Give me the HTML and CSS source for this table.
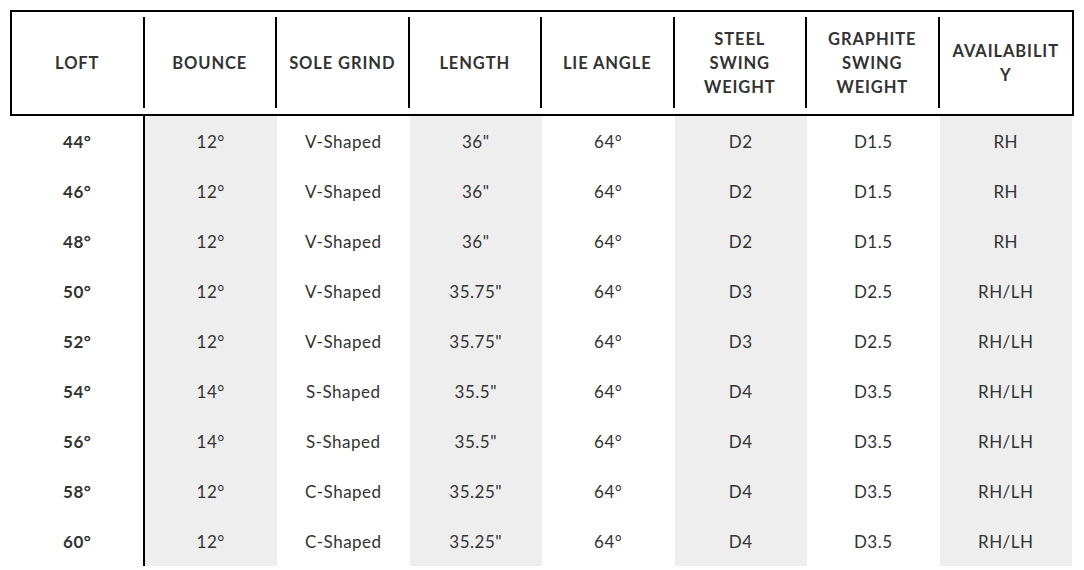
FILE: index.html
```html
<!DOCTYPE html>
<html lang="en">
<head>
<meta charset="utf-8">
<title>Wedge Specs</title>
<link rel="stylesheet" href="styles.css">
</head>
<body>
<div class="spec">
  <div class="head">
    <div class="hc"><div class="hi">LOFT</div></div>
    <div class="hc"><div class="hi">BOUNCE</div></div>
    <div class="hc"><div class="hi">SOLE GRIND</div></div>
    <div class="hc"><div class="hi">LENGTH</div></div>
    <div class="hc"><div class="hi">LIE ANGLE</div></div>
    <div class="hc"><div class="hi">STEEL SWING WEIGHT</div></div>
    <div class="hc"><div class="hi">GRAPHITE SWING WEIGHT</div></div>
    <div class="hc last"><div class="hi">AVAILABILIT Y</div></div>
  </div>
  <div class="body">
    <div class="row"><div class="c loft">44°</div><div class="c g">12°</div><div class="c">V-Shaped</div><div class="c g">36"</div><div class="c">64°</div><div class="c g">D2</div><div class="c">D1.5</div><div class="c g">RH</div></div>
    <div class="row"><div class="c loft">46°</div><div class="c g">12°</div><div class="c">V-Shaped</div><div class="c g">36"</div><div class="c">64°</div><div class="c g">D2</div><div class="c">D1.5</div><div class="c g">RH</div></div>
    <div class="row"><div class="c loft">48°</div><div class="c g">12°</div><div class="c">V-Shaped</div><div class="c g">36"</div><div class="c">64°</div><div class="c g">D2</div><div class="c">D1.5</div><div class="c g">RH</div></div>
    <div class="row"><div class="c loft">50°</div><div class="c g">12°</div><div class="c">V-Shaped</div><div class="c g">35.75"</div><div class="c">64°</div><div class="c g">D3</div><div class="c">D2.5</div><div class="c g">RH/LH</div></div>
    <div class="row"><div class="c loft">52°</div><div class="c g">12°</div><div class="c">V-Shaped</div><div class="c g">35.75"</div><div class="c">64°</div><div class="c g">D3</div><div class="c">D2.5</div><div class="c g">RH/LH</div></div>
    <div class="row"><div class="c loft">54°</div><div class="c g">14°</div><div class="c">S-Shaped</div><div class="c g">35.5"</div><div class="c">64°</div><div class="c g">D4</div><div class="c">D3.5</div><div class="c g">RH/LH</div></div>
    <div class="row"><div class="c loft">56°</div><div class="c g">14°</div><div class="c">S-Shaped</div><div class="c g">35.5"</div><div class="c">64°</div><div class="c g">D4</div><div class="c">D3.5</div><div class="c g">RH/LH</div></div>
    <div class="row"><div class="c loft">58°</div><div class="c g">12°</div><div class="c">C-Shaped</div><div class="c g">35.25"</div><div class="c">64°</div><div class="c g">D4</div><div class="c">D3.5</div><div class="c g">RH/LH</div></div>
    <div class="row"><div class="c loft">60°</div><div class="c g">12°</div><div class="c">C-Shaped</div><div class="c g">35.25"</div><div class="c">64°</div><div class="c g">D4</div><div class="c">D3.5</div><div class="c g">RH/LH</div></div>
  </div>
</div>
</body>
</html>
```
FILE: styles.css
```css
html, body {
  margin: 0;
  padding: 0;
  background: #fff;
}
body {
  font-family: Lato, "Noto Sans", sans-serif;
  color: #333;
}
.spec {
  padding: 10px 10px 0 10px;
}
.head {
  display: grid;
  grid-template-columns: repeat(8, 1fr);
  border: 2px solid #000;
  height: 102px;
}
.hc {
  padding: 5px 0 6px 0;
  display: flex;
}
.hi {
  flex: 1;
  display: flex;
  align-items: center;
  justify-content: center;
  text-align: center;
  border-right: 2px solid #000;
  font-size: 16.5px;
  font-weight: 700;
  letter-spacing: 0.9px;
  line-height: 24px;
  padding: 0 11px;
}
.hc.last .hi {
  border-right: none;
}
.body {
  padding: 0 2px;
}
.row {
  display: grid;
  grid-template-columns: repeat(8, 1fr);
  height: 50px;
}
.c {
  display: flex;
  align-items: center;
  justify-content: center;
  font-size: 17px;
  letter-spacing: 0.5px;
}
.c.g {
  background: #eeeeee;
}
.c.loft {
  font-weight: 700;
  border-right: 2px solid #000;
}
```
